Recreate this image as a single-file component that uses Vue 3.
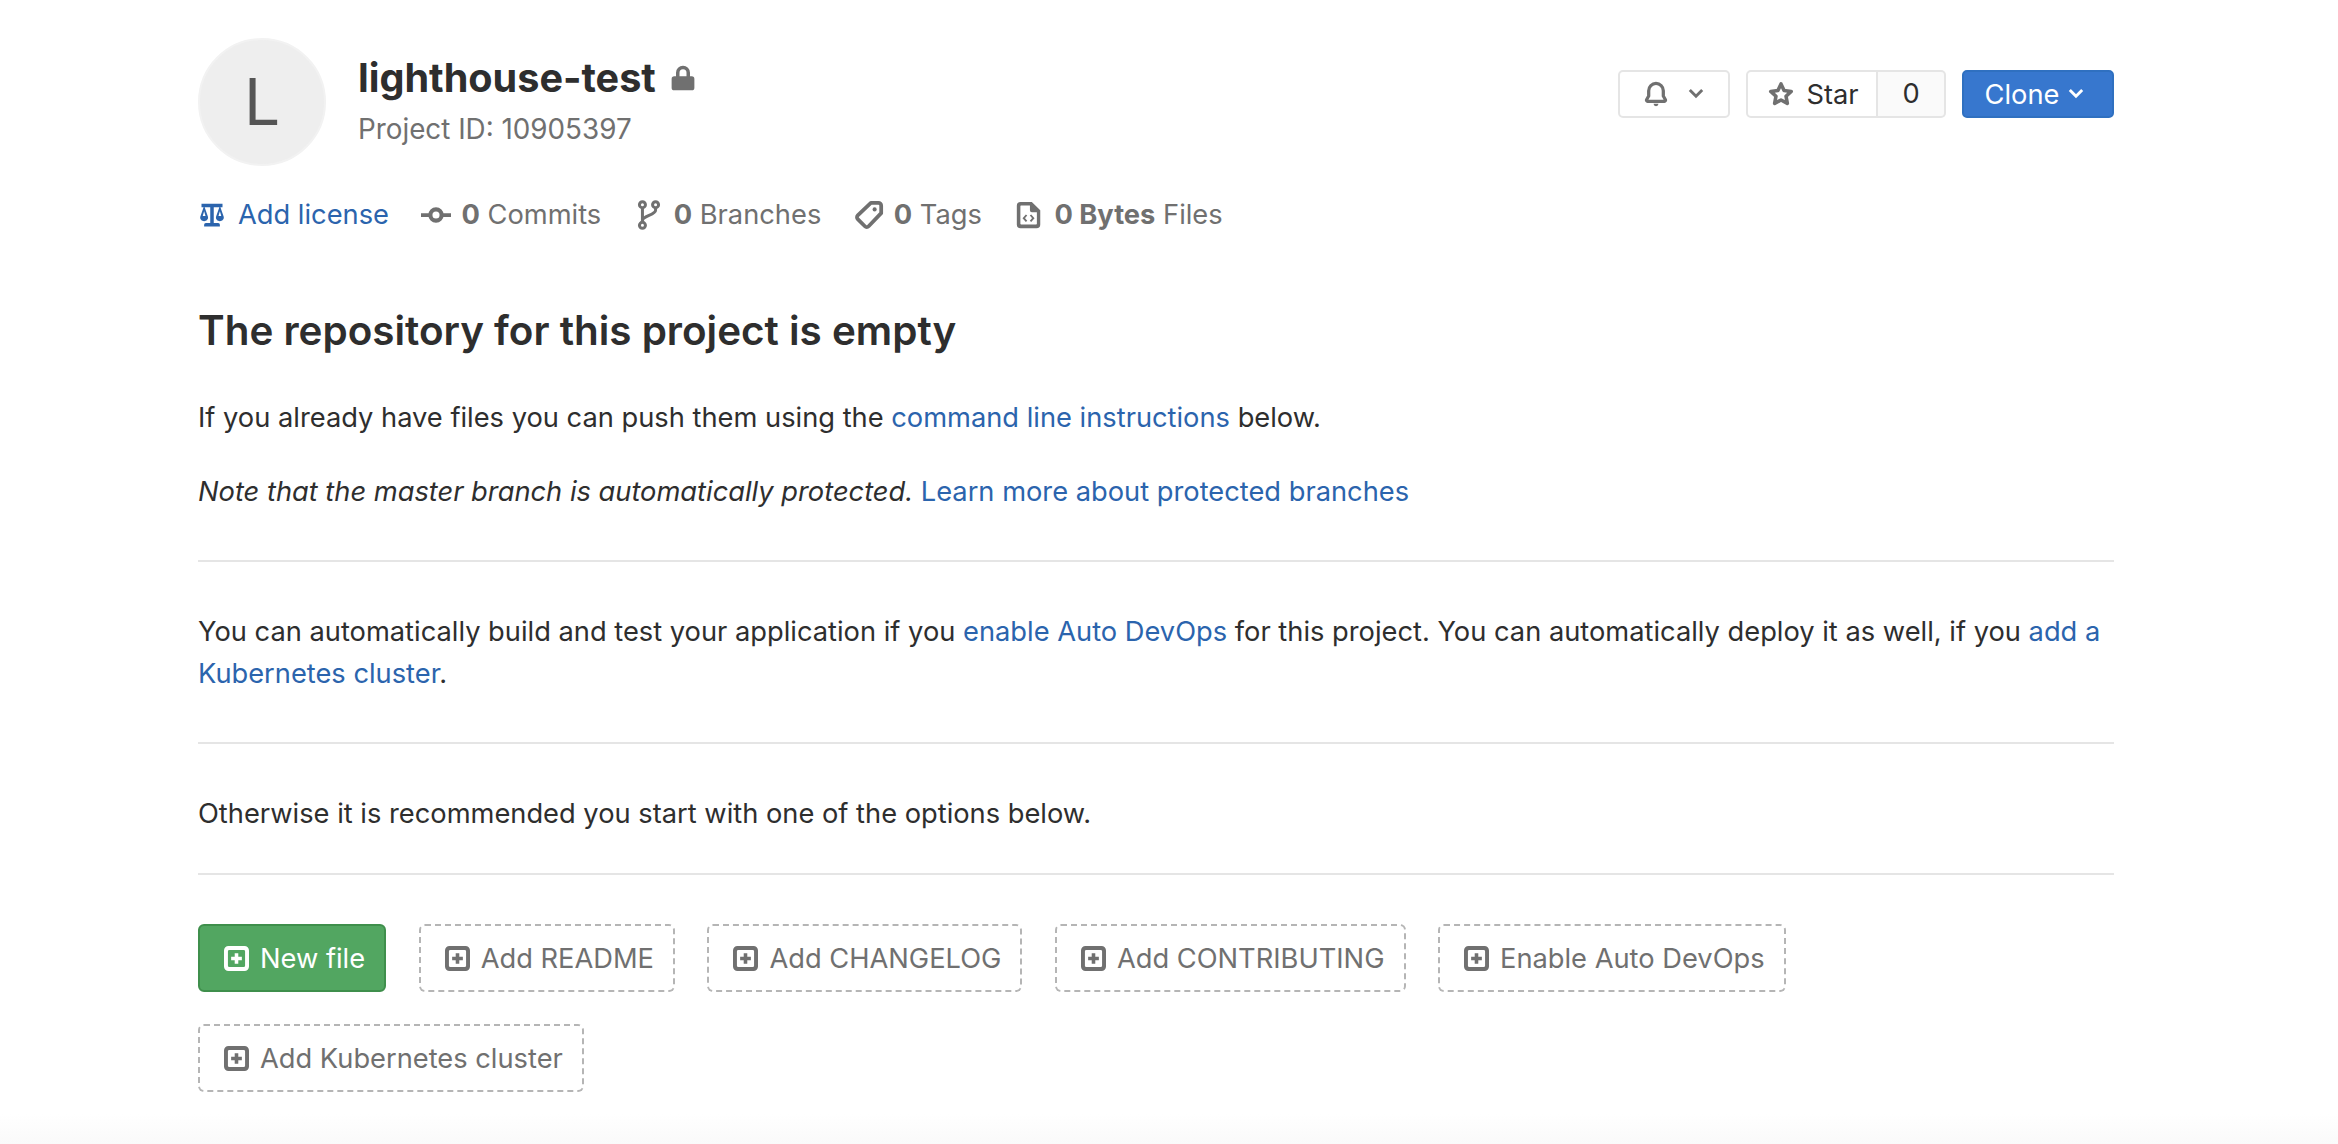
<template>
  <div class="page">
    <header class="project-head">
      <div class="avatar">L</div>
      <div class="project-title">
        <h1>
          lighthouse-test
          <svg class="lock" viewBox="0 0 16 16"><path d="M3 7h1V5a4 4 0 0 1 8 0v2h1a1.5 1.5 0 0 1 1.500 1.500v5A1.500 1.500 0 0 1 13 15H3a1.500 1.500 0 0 1-1.500-1.500v-5A1.500 1.500 0 0 1 3 7zm3 0h4V5a2 2 0 0 0-4 0z" /></svg>
        </h1>
        <div class="project-id">Project ID: 10905397</div>
      </div>
      <div class="head-actions">
        <button class="btn bell-btn">
          <svg class="ic-bell" viewBox="0 0 16 16"><path d="M8 1.500a4.500 4.500 0 0 1 4.500 4.500v3.200l1.300 2.300a.7.7 0 0 1-.6 1H2.800a.7.7 0 0 1-.6-1l1.300-2.300V6A4.500 4.500 0 0 1 8 1.500z" fill="none" stroke="currentColor" stroke-width="2" stroke-linejoin="round" /><path d="M6.500 14h3a1.500 1.500 0 0 1-3 0z" /></svg>
          <svg class="chev" viewBox="0 0 16 16"><path d="M2.500 4.500 8 10l5.500-5.500" fill="none" stroke="currentColor" stroke-width="2.600" /></svg>
        </button>
        <div class="star-group">
          <button class="btn star-btn">
            <svg class="ic-star" viewBox="0 0 16 16"><path d="M8 1.800l1.900 4 4.400.6-3.200 3 .8 4.400L8 11.700l-3.900 2.100.8-4.400-3.200-3 4.400-.6z" fill="none" stroke="currentColor" stroke-width="2.200" stroke-linejoin="round" /></svg>
            Star
          </button>
          <span class="star-count">0</span>
        </div>
        <button class="btn clone-btn">
          Clone
          <svg class="chev" viewBox="0 0 16 16"><path d="M2.500 4.500 8 10l5.500-5.500" fill="none" stroke="currentColor" stroke-width="2.600" /></svg>
        </button>
      </div>
    </header>

    <nav class="stats">
      <a class="stat stat-link">
        <svg class="ic-scale" viewBox="0 0 16 16"><path d="M2 1.500h12v2h-1.200l1.900 5.500c.3 1.400-.9 2.500-2.200 2.500s-2.500-1.100-2.200-2.500l1.900-5.500H9v9h2.500a1 1 0 0 1 1 1v1h-9v-1a1 1 0 0 1 1-1H7v-9H3.800l1.900 5.500c.3 1.400-.9 2.500-2.200 2.500S1 10.400 1.300 9l1.900-5.500H2zM3.500 5.800 2.700 8.500h1.600zm9 0-.8 2.700h1.600z" fill-rule="evenodd" /></svg>
        Add license
      </a>
      <span class="stat">
        <svg class="ic" viewBox="0 0 16 16"><circle cx="8" cy="8" r="3" fill="none" stroke="currentColor" stroke-width="2.200" /><path d="M0 7h4.500v2H0zM11.500 7H16v2h-4.500z" /></svg>
        <span><b>0</b> Commits</span>
      </span>
      <span class="stat">
        <svg class="ic" viewBox="0 0 16 16"><g fill="none" stroke="currentColor" stroke-width="1.600"><circle cx="4.500" cy="2.500" r="1.600" /><circle cx="11.500" cy="2.500" r="1.600" /><circle cx="4.500" cy="13.500" r="1.600" /><path d="M4.500 4v8M11.500 4v1.500c0 2.500-7 3-7 5.500" /></g></svg>
        <span><b>0</b> Branches</span>
      </span>
      <span class="stat">
        <svg class="ic" viewBox="0 0 16 16"><path d="M9 1.500h4a1.500 1.500 0 0 1 1.500 1.500v4L7.800 14a1.400 1.400 0 0 1-2 0L2 10.200a1.400 1.400 0 0 1 0-2z" fill="none" stroke="currentColor" stroke-width="2" stroke-linejoin="round" /><circle cx="11" cy="5" r="1.100" /></svg>
        <span><b>0</b> Tags</span>
      </span>
      <span class="stat">
        <svg class="ic" viewBox="0 0 16 16"><path d="M3.500 1H9.500L14 5.500V13a2 2 0 0 1-2 2H3.500a2 2 0 0 1-2-2V3a2 2 0 0 1 2-2zm.2 1.900a.5.5 0 0 0-.3.400v9.400a.5.5 0 0 0 .4.400h8a.5.5 0 0 0 .4-.400V6.500H9.500a1 1 0 0 1-1-1V2.900z" fill-rule="evenodd" /><path d="M6.700 8 5.200 9.700l1.500 1.700M8.800 8l1.500 1.700-1.500 1.700" fill="none" stroke="currentColor" stroke-width="1" /></svg>
        <span><b>0 Bytes</b> Files</span>
      </span>
    </nav>

    <main class="content">
      <h2>The repository for this project is empty</h2>
      <p class="p-first">If you already have files you can push them using the <a>command line instructions</a> below.</p>
      <p class="p-note"><em>Note that the master branch is automatically protected.</em> <a>Learn more about protected branches</a></p>
      <hr class="hr-one" />
      <p>You can automatically build and test your application if you <a>enable Auto DevOps</a> for this project. You can automatically deploy it as well, if you <a>add a Kubernetes cluster</a>.</p>
      <hr class="hr-two" />
      <p>Otherwise it is recommended you start with one of the options below.</p>
      <hr class="hr-three" />
      <div class="options">
        <a v-for="o in options" :key="o.label" class="option" :class="{ primary: o.primary }">
          <svg class="plus" viewBox="1 1 14 14"><path d="M3.500 1h9A2.500 2.500 0 0 1 15 3.500v9a2.500 2.500 0 0 1-2.500 2.500h-9A2.500 2.500 0 0 1 1 12.500v-9A2.500 2.500 0 0 1 3.500 1zm.5 2.200a.8.8 0 0 0-.8.800v8a.8.8 0 0 0 .8.800h8a.8.8 0 0 0 .8-.800V4a.8.8 0 0 0-.8-.800zm3 1.800h2v2h2v2H9v2H7V9H5V7h2z" fill-rule="evenodd" /></svg>
          {{ o.label }}
        </a>
      </div>
    </main>
    <div class="bottom-fade"></div>
  </div>
</template>

<script setup>
const options = [
  { label: 'New file', primary: true },
  { label: 'Add README' },
  { label: 'Add CHANGELOG' },
  { label: 'Add CONTRIBUTING' },
  { label: 'Enable Auto DevOps' },
  { label: 'Add Kubernetes cluster' }
]
</script>

<style>
html,
body {
  margin: 0;
  background: #fff;
}
</style>

<style scoped>
.page {
  position: relative;
  width: 2338px;
  height: 1144px;
  box-sizing: border-box;
  padding: 38px 224px 0 198px;
  overflow: hidden;
  font-family: Inter, 'Noto Sans', sans-serif;
  font-size: 27.27px;
  color: #2e2e2e;
}

.project-head {
  display: flex;
  align-items: flex-start;
}

.avatar {
  width: 128px;
  height: 128px;
  box-sizing: border-box;
  border: 2px solid #f2f2f2;
  border-radius: 50%;
  background: #eee;
  color: #555;
  font-size: 64px;
  line-height: 124px;
  text-align: center;
}

.project-title {
  margin-left: 32px;
  padding-top: 15px;
}

.project-title h1 {
  display: flex;
  align-items: center;
  margin: 0;
  font-size: 39.600px;
  line-height: 50px;
  font-weight: 700;
}

.lock {
  width: 28px;
  height: 28px;
  margin-left: 13px;
  fill: #707070;
}

.project-id {
  margin-top: 6px;
  font-size: 27.800px;
  line-height: 40px;
  color: #707070;
}

.head-actions {
  display: flex;
  gap: 16px;
  margin-left: auto;
  margin-top: 32px;
}

.btn {
  display: flex;
  align-items: center;
  height: 48px;
  box-sizing: border-box;
  border: 2px solid #e5e5e5;
  border-radius: 5px;
  background: #fff;
  color: #2e2e2e;
  font: inherit;
  padding: 0;
}

.bell-btn {
  width: 112px;
  justify-content: center;
  gap: 18px;
  color: #707070;
}

.ic-bell {
  width: 26px;
  height: 26px;
  fill: currentColor;
}

.chev {
  width: 18px;
  height: 18px;
}

.star-group {
  display: flex;
}

.star-btn {
  width: 132px;
  justify-content: center;
  gap: 12px;
  padding-left: 3px;
  border-radius: 5px 0 0 5px;
}

.ic-star {
  width: 26px;
  height: 26px;
  color: #707070;
}

.star-count {
  width: 68px;
  height: 48px;
  box-sizing: border-box;
  border: 2px solid #e5e5e5;
  border-left: 0;
  border-radius: 0 5px 5px 0;
  background: #fafafa;
  line-height: 44px;
  text-align: center;
}

.clone-btn {
  width: 152px;
  justify-content: center;
  gap: 8px;
  padding-right: 6px;
  border-color: #2f70c0;
  background: #3777ce;
  color: #fff;
}

.stats {
  display: flex;
  align-items: center;
  gap: 32.500px;
  margin-top: 29px;
  line-height: 40px;
  color: #707070;
}

.stat {
  display: flex;
  align-items: center;
  gap: 10px;
}

.stat b {
  font-weight: 700;
}

.stat-link {
  gap: 12px;
  color: #2b64ad;
}

.ic-scale {
  width: 28px;
  height: 28px;
  fill: currentColor;
}

.ic {
  width: 30px;
  height: 30px;
  fill: currentColor;
}

.content {
  margin-top: 69px;
}

h2 {
  margin: 0;
  font-size: 40.400px;
  line-height: 54px;
  font-weight: 600;
}

p {
  margin: 0;
  line-height: 42px;
  color: #2e2e2e;
}

p a {
  color: #2b64ad;
}

.p-first {
  margin-top: 39px;
}

.p-note {
  margin-top: 32px;
}

hr {
  height: 2px;
  border: 0;
  background: #e5e5e5;
}

.hr-one {
  margin: 47px 0 49px;
}

.hr-two {
  margin: 47px 0 49px;
}

.hr-three {
  margin: 38px 0 49px;
}

.options {
  display: flex;
  flex-wrap: wrap;
  gap: 32px 32.500px;
}

.option {
  display: flex;
  align-items: center;
  gap: 11px;
  height: 68px;
  box-sizing: border-box;
  padding: 0 19px 0 24px;
  border: 2px dashed #b5b5b5;
  border-radius: 6px;
  color: #707070;
}

.option.primary {
  border: 2px solid #3f8f4c;
  background: #52a661;
  color: #fff;
}

.plus {
  width: 25px;
  height: 25px;
  fill: currentColor;
}

.bottom-fade {
  position: absolute;
  left: 0;
  right: 0;
  bottom: 0;
  height: 30px;
  background: linear-gradient(#fff, #fafafa);
}
</style>
